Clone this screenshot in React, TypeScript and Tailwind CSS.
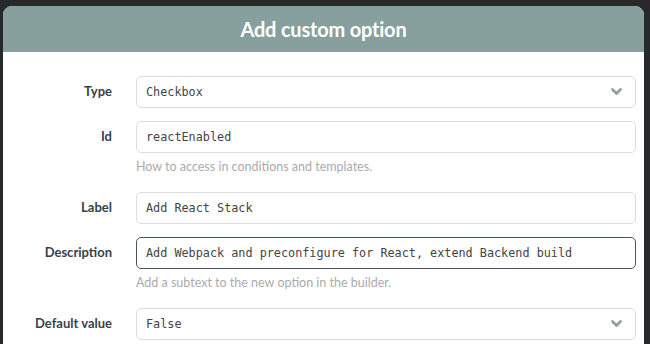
import React from "react";

interface Field {
  label: string;
  value: string;
  select?: boolean;
  focused?: boolean;
  help?: string;
}

const fields: Field[] = [
  { label: "Type", value: "Checkbox", select: true },
  { label: "Id", value: "reactEnabled", help: "How to access in conditions and templates." },
  { label: "Label", value: "Add React Stack" },
  {
    label: "Description",
    value: "Add Webpack and preconfigure for React, extend Backend build",
    focused: true,
    help: "Add a subtext to the new option in the builder.",
  },
  { label: "Default value", value: "False", select: true },
];

function Chevron() {
  return (
    <svg width="11" height="8" viewBox="0 0 11 8" className="shrink-0">
      <path d="M1.5 1.5 L5.5 5.5 L9.5 1.5" fill="none" stroke="#8aa19e" strokeWidth="2.6" strokeLinecap="round" strokeLinejoin="round" />
    </svg>
  );
}

export default function App() {
  return (
    <div className="h-[344px] w-[650px] overflow-hidden bg-[#27292b] pt-[6px] pl-[3px] pr-[6px]">
      <div className="h-full rounded-t-[9px] bg-white overflow-hidden">
        <div className="h-[46px] bg-[#88a09d] flex items-center justify-center">
          <h1 className="text-white text-[20px] font-bold font-['Lato',sans-serif] tracking-[-0.2px]">
            Add custom option
          </h1>
        </div>
        <div className="pt-[24px] pr-[8px] flex flex-col gap-[13px]">
          {fields.map((f) => (
            <div key={f.label} className="flex">
              <div className="w-[109px] h-8 flex items-center justify-end text-[13px] font-bold text-[#36434a] font-['Lato',sans-serif]">
                {f.label}
              </div>
              <div className="ml-[24px] flex-1">
                <div
                  className={`h-8 rounded-[5px] border flex items-center justify-between pl-[9px] pr-[13px] ${
                    f.focused ? "border-[#46545b]" : "border-[#dcdcdc]"
                  }`}
                >
                  <span className="pt-[1px] text-[11.8px] text-[#444] font-['DejaVu_Sans_Mono',monospace] whitespace-nowrap">
                    {f.value}
                  </span>
                  {f.select && <Chevron />}
                </div>
                {f.help && (
                  <div className="mt-[6px] pb-[4px] leading-4 text-[12.5px] text-[#ababab] font-['Lato',sans-serif]">
                    {f.help}
                  </div>
                )}
              </div>
            </div>
          ))}
        </div>
      </div>
    </div>
  );
}
